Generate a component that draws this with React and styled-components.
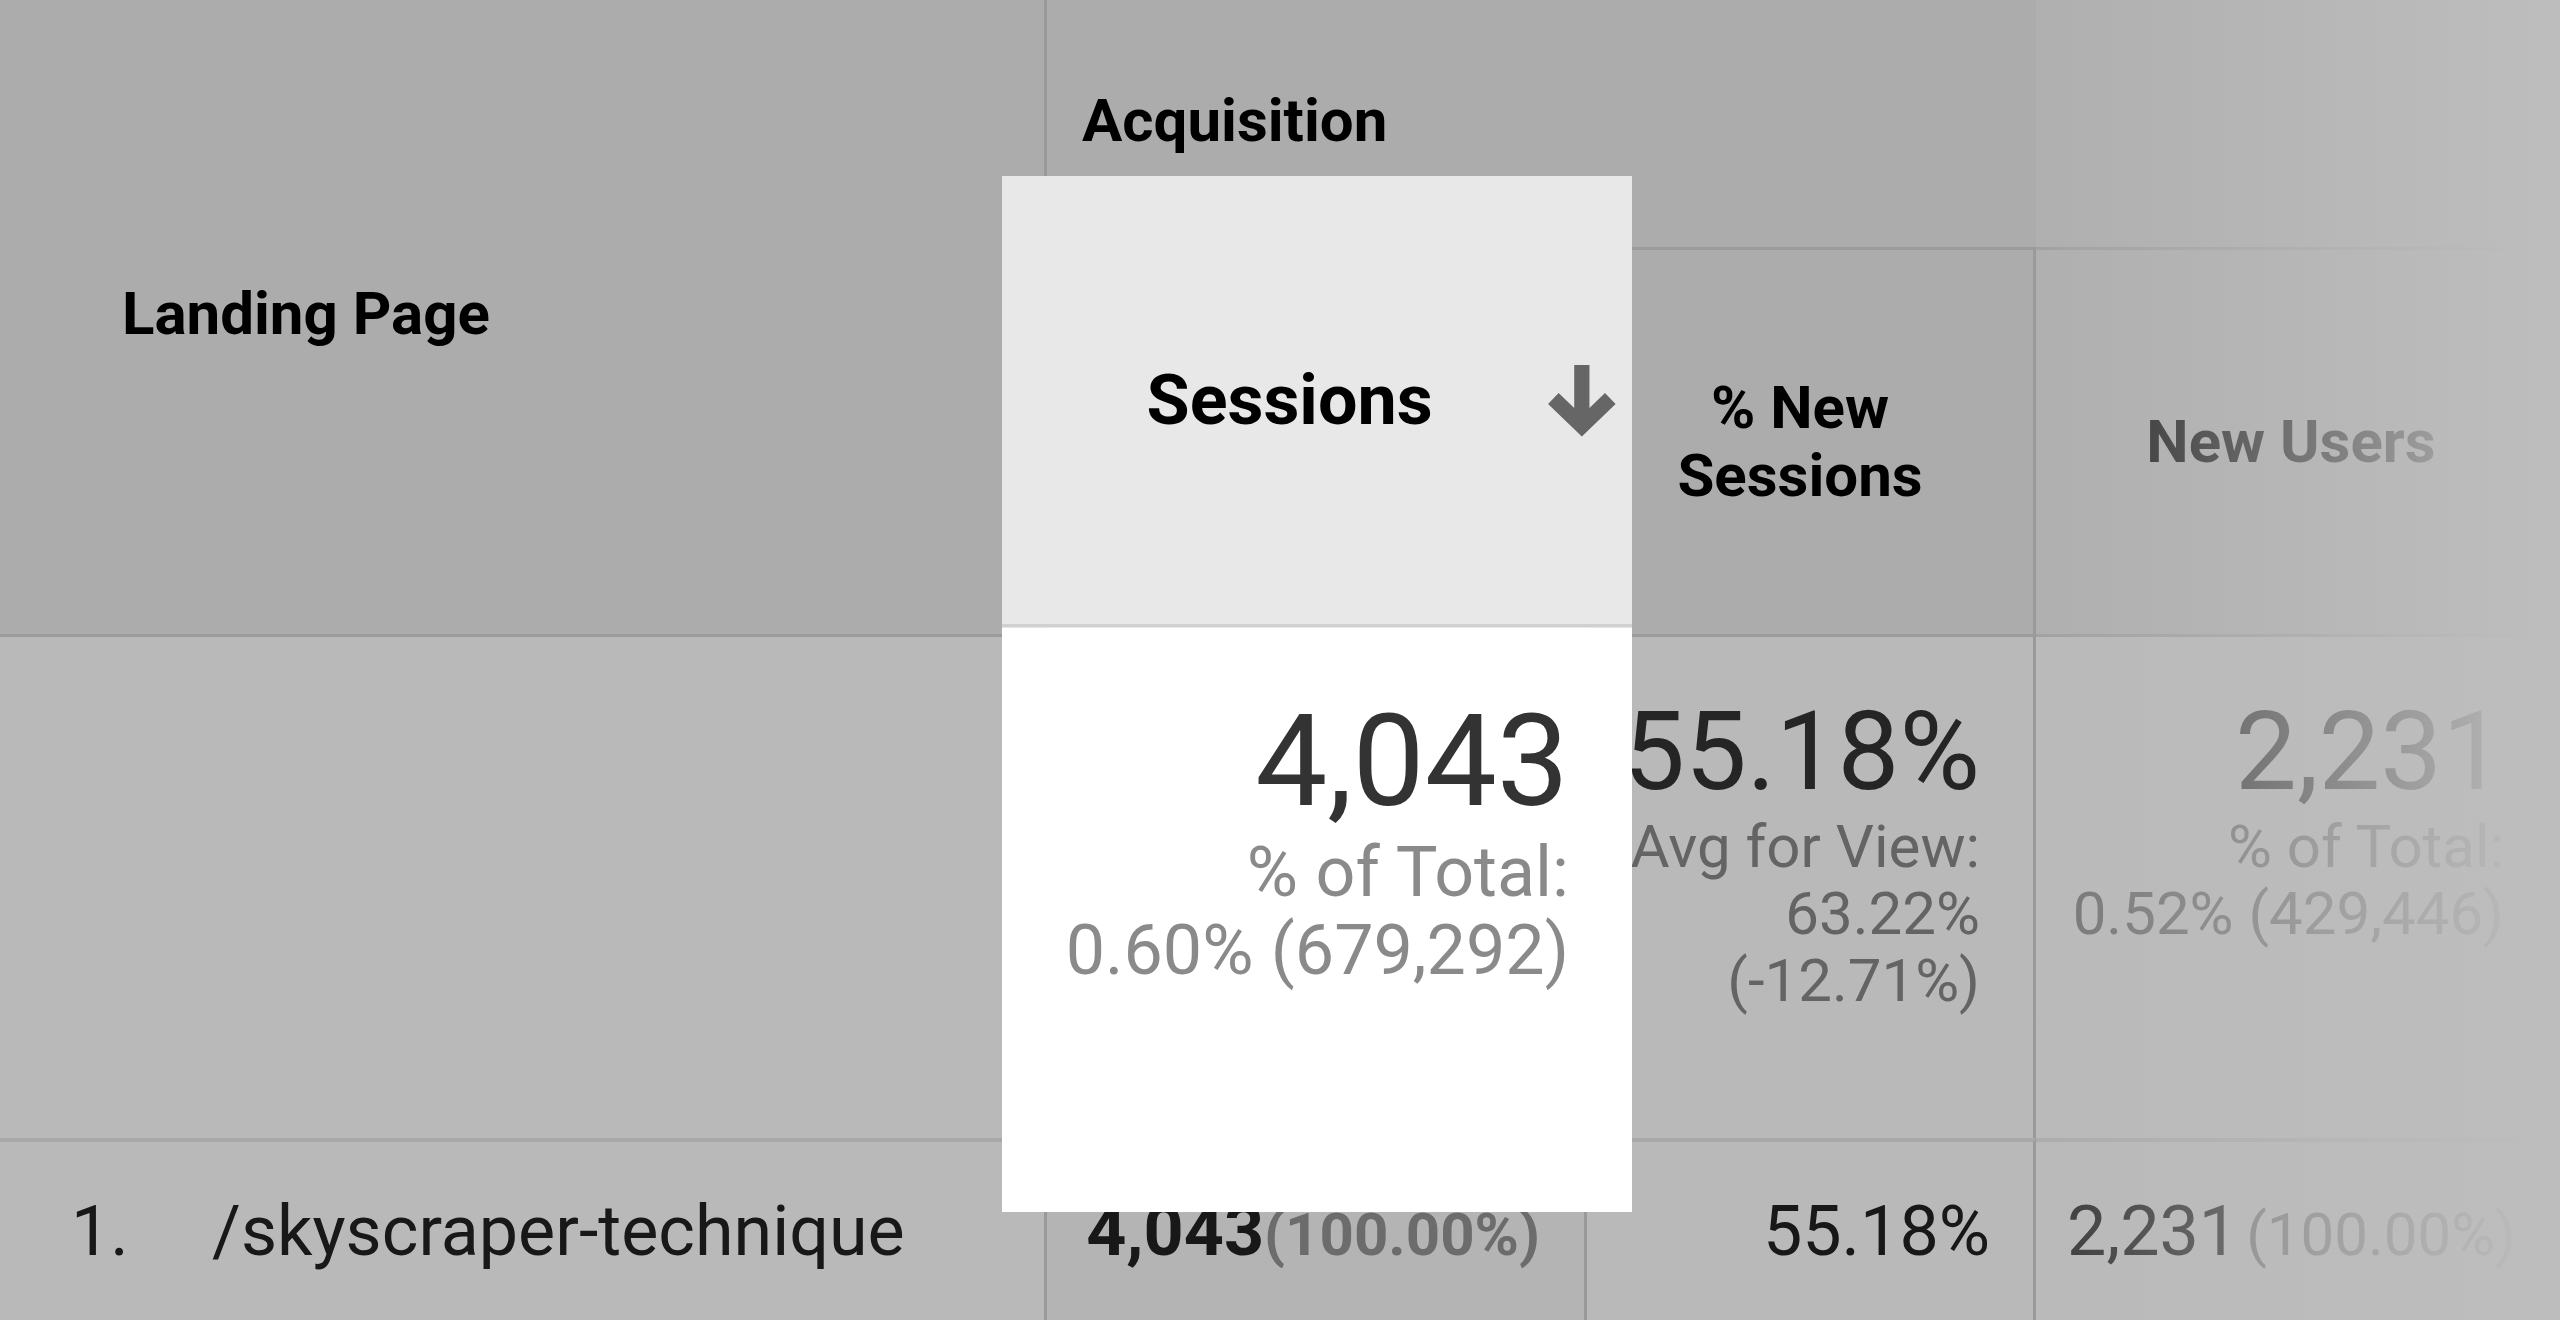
import React from "react";
import styled, { createGlobalStyle } from "styled-components";

const GlobalStyle = createGlobalStyle`
  body {
    margin: 0;
    background: #bababa;
  }
`;

const Page = styled.div`
  position: relative;
  width: 2560px;
  height: 1320px;
  overflow: hidden;
  background: #fff;
  font-family: Roboto, "Liberation Sans", sans-serif;
`;

const Table = styled.div`
  display: grid;
  grid-template-columns: 1047px 540px 449px 510px 1fr;
  grid-template-rows: 250px 387px 501px 260px;
`;

// dims everything except the spotlighted column
const Dim = styled.div`
  position: absolute;
  inset: 0;
  z-index: 1;
  background: rgba(0, 0, 0, 0.275);
  pointer-events: none;
`;

const Fade = styled.div`
  position: absolute;
  top: 0;
  bottom: 0;
  left: 2036px;
  right: 0;
  z-index: 3;
  background: linear-gradient(
    to right,
    rgba(189, 189, 189, 0.2),
    rgba(189, 189, 189, 1) 97%
  );
  pointer-events: none;
`;

const HeadCell = styled.div`
  box-sizing: border-box;
  background: #eeeeee;
  border-bottom: 3px solid #d6d6d6;
  border-right: ${(p) => (p.$divider ? "3px solid #d4d4d4" : "none")};
  font-size: 60px;
  font-weight: 700;
  color: #000;
`;

const LandingHead = styled(HeadCell)`
  grid-row: 1 / 3;
  padding: 278px 0 0 122px;
`;

const GroupHead = styled(HeadCell)`
  grid-column: 2 / -1;
  padding: 85px 0 0 35px;
`;

const MetricHead = styled(HeadCell)`
  display: flex;
  align-items: center;
  justify-content: center;
  padding-right: ${(p) => p.$shift || 0}px;
  text-align: center;
  line-height: 68px;
`;

const Spotlight = styled.div`
  grid-column: 2;
  grid-row: 2 / 4;
  position: relative;
  z-index: 2;
  display: grid;
  grid-template-rows: 387px 501px;
  transform: scale(1.1667);
`;

const SortedHead = styled.div`
  box-sizing: border-box;
  display: flex;
  align-items: center;
  padding-left: 24px;
  background: #e8e8e8;
  border-bottom: 3px solid #d0d0d0;
  font-size: 60px;
  font-weight: 700;
  color: #000;
`;

const SortLabel = styled.span`
  flex: 1;
  text-align: center;
`;

const SortArrow = styled.svg`
  width: 56px;
  height: 61px;
  margin-right: 15px;
  flex: none;
  overflow: visible;
`;

const TotalCell = styled.div`
  box-sizing: border-box;
  background: #fff;
  border-right: ${(p) => (p.$divider ? "3px solid #d4d4d4" : "none")};
  padding: 54px ${(p) => p.$pad ?? 54}px 0 0;
  text-align: right;
  white-space: nowrap;
`;

const Value = styled.div`
  font-size: 110px;
  line-height: 122px;
  color: #333;
`;

const Sub = styled.div`
  font-size: 60px;
  line-height: 67px;
  color: #8a8a8a;
`;

const DataCell = styled.div`
  box-sizing: border-box;
  background: ${(p) => p.$bg || "#fff"};
  border-top: 4px solid #e8e8e8;
  border-right: ${(p) => (p.$divider ? "3px solid #d4d4d4" : "none")};
  padding: 48px ${(p) => (p.$left ? 0 : p.$pad ?? 44)}px 0
    ${(p) => (p.$left ? 71 : 0)}px;
  text-align: ${(p) => (p.$left ? "left" : "right")};
  font-size: 70px;
  font-weight: ${(p) => (p.$sorted ? 700 : 400)};
  color: #222;
  white-space: nowrap;
`;

const RowIndex = styled.span`
  display: inline-block;
  width: 141px;
`;

const Share = styled.span`
  margin-left: ${(p) => p.$gap || 0}px;
  font-size: 60px;
  color: #959595;
`;

const App = () => {
  return (
    <Page>
      <GlobalStyle />
      <Table>
        <LandingHead $divider>Landing Page</LandingHead>
        <GroupHead>Acquisition</GroupHead>

        <Spotlight>
          <SortedHead>
            <SortLabel>Sessions</SortLabel>
            <SortArrow viewBox="0 0 64 70">
              <path d="M32 0 V60" stroke="#666" strokeWidth="15" fill="none" />
              <path
                d="M4 33 L32 60 L60 33"
                stroke="#666"
                strokeWidth="15"
                fill="none"
              />
            </SortArrow>
          </SortedHead>
          <TotalCell>
            <Value>4,043</Value>
            <Sub>% of Total:</Sub>
            <Sub>0.60% (679,292)</Sub>
          </TotalCell>
        </Spotlight>

        <MetricHead $divider $shift={20}>
          % New
          <br />
          Sessions
        </MetricHead>
        <MetricHead>New Users</MetricHead>
        <HeadCell />

        <TotalCell $divider />
        <TotalCell $divider $pad={53}>
          <Value>55.18%</Value>
          <Sub>Avg for View:</Sub>
          <Sub>63.22%</Sub>
          <Sub>(-12.71%)</Sub>
        </TotalCell>
        <TotalCell $pad={42}>
          <Value>2,231</Value>
          <Sub>% of Total:</Sub>
          <Sub>0.52% (429,446)</Sub>
        </TotalCell>
        <TotalCell />

        <DataCell $left $divider>
          <RowIndex>1.</RowIndex>/skyscraper-technique
        </DataCell>
        <DataCell $divider $sorted $bg="#f9f9f9">
          4,043
          <Share>(100.00%)</Share>
        </DataCell>
        <DataCell $divider $pad={43}>
          55.18%
        </DataCell>
        <DataCell $pad={30}>
          2,231
          <Share $gap={8}>(100.00%)</Share>
        </DataCell>
        <DataCell />
      </Table>
      <Dim />
      <Fade />
    </Page>
  );
};

export default App;
